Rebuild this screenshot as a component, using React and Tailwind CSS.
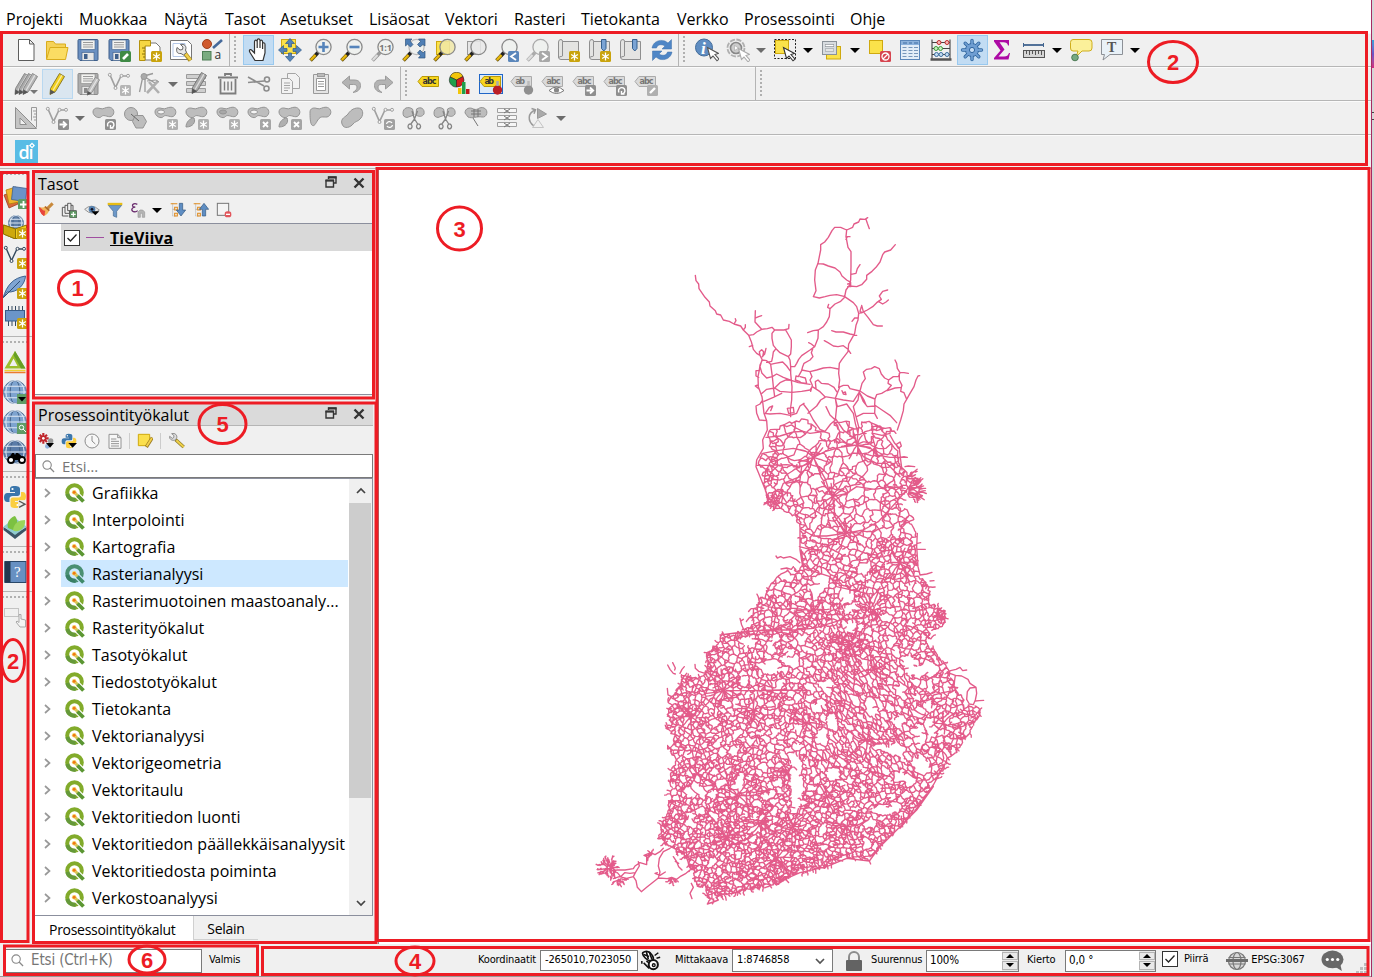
import React from "react";

/* ---------- road network ---------- */
const COAST = [
  [556, 690], [575, 665], [632, 665], [680, 650], [735, 690], [775, 650], [830, 660], [890, 665], [950, 675], [950, 690], [930, 705], [960, 780], [975, 805], [985, 830],
  [985, 880], [985, 925], [1010, 970], [1012, 1050], [1020, 1125], [1055, 1145], [1052, 1200], [1098, 1240], [1100, 1270], [1050, 1305], [1060, 1340], [1095, 1390],
  [1115, 1425], [1135, 1480], [1165, 1510], [1203, 1525], [1195, 1560], [1150, 1630], [1100, 1700], [1060, 1760], [1010, 1830], [960, 1880],
  [900, 1940], [870, 1983], [800, 1972], [740, 2000], [660, 2018], [590, 2053], [540, 2068], [480, 2078], [430, 2090], [385, 2100], [375, 2060], [350, 2065],
  [345, 2030], [310, 1970], [250, 1935], [235, 1890], [265, 1820], [270, 1730], [260, 1650], [275, 1610], [258, 1580], [262, 1500], [300, 1455],
  [305, 1425], [375, 1420], [380, 1370], [418, 1305], [490, 1290], [520, 1220], [580, 1140], [605, 1108], [665, 1100], [655, 1050], [660, 980],
  [640, 950], [600, 930], [562, 915], [548, 850], [530, 800], [550, 740],
];
const LAKES = [
  [650, 1765, 17, 62], [648, 1690, 11, 30], [575, 1402, 32, 20], [1035, 1408, 42, 16], [1020, 1605, 15, 35], [712, 1515, 18, 16], [915, 1828, 45, 10],
  [752, 1562, 14, 18], [970, 1732, 24, 12], [762, 1722, 18, 16], [483, 1745, 8, 26], [870, 1515, 13, 20], [810, 1280, 20, 17], [800, 1190, 20, 18],
  [505, 1330, 22, 18], [1050, 1585, 12, 24], [1030, 1695, 18, 20], [275, 1985, 30, 26], [620, 1380, 18, 14], [985, 1390, 16, 26], [955, 1560, 22, 12],
  [940, 1645, 26, 14], [560, 1790, 12, 10], [400, 1785, 14, 10], [720, 1140, 22, 12], [710, 1170, 14, 20], [850, 1110, 18, 10], [1045, 1515, 12, 16],
  [725, 1605, 8, 16], [525, 1850, 10, 8], [440, 1510, 14, 6], [320, 1660, 12, 9], [820, 1220, 18, 8], [490, 1440, 10, 12], [745, 1455, 10, 14], [335, 1865, 8, 14],
  [575, 1340, 12, 24], [680, 1690, 8, 16], [960, 1470, 14, 12], [905, 1640, 16, 8],
];
/* towns where main roads meet: x, y, number of roads, reach */
const HUBS = [
  [700, 772, 7, 50], [832, 735, 7, 45], [758, 890, 6, 50], [795, 1002, 7, 60], [960, 1090, 8, 60], [700, 1230, 7, 60], [870, 1225, 8, 60], [810, 1335, 9, 60], [580, 1290, 6, 60],
  [430, 1470, 8, 60], [520, 1530, 7, 60], [880, 1410, 7, 60], [680, 1570, 8, 55], [620, 1715, 8, 50], [470, 1785, 8, 70], [440, 1910, 10, 60], [590, 1975, 10, 60], [640, 1880, 8, 60],
  [800, 1880, 8, 60], [330, 1550, 7, 50], [860, 1620, 7, 60], [320, 1970, 8, 50], [540, 1870, 7, 60], [1090, 1570, 7, 50], [350, 1720, 7, 60], [740, 1790, 7, 50],
];
const HAND = [
  "346,226 348,242 356,252 357,266 375,292 388,306 390,318 406,332 410,342 422,345 430,360 448,364 462,372 482,378 490,390 500,400 506,406",
  "462,372 468,362 466,356", "490,390 496,382 496,374", "506,406 514,425 520,448 530,460 540,466 547,480", "518,436 508,440",
  "506,406 520,404 530,396 545,388 562,386 576,382 584,390 612,390 626,386 627,373", "545,388 525,366 526,332", "527,354 536,350 545,347",
  "584,390 576,400 576,415 580,436 588,446 600,458 625,470 632,462 634,440 634,420 624,402 618,392",
  "588,446 580,456 578,470 575,484 560,487", "625,470 630,480 632,500 632,520 634,541 636,560 635,600 631,630 632,650", "540,466 538,455 545,449 551,455 548,470", "558,445 554,462 547,470",
  "547,480 560,482 572,493 585,490 608,486 620,498 630,512", "632,500 644,500 650,490 656,478 665,467 690,450 704,440",
  "863,53 855,58 840,57 836,66 822,72 818,82 800,90 782,82 764,82 756,92 745,112 734,126 722,134 722,150 718,170 714,190 706,210 704,240 706,256 708,272 700,290 718,294 735,290 750,286 770,284 795,290", "858,58 862,70 868,86",
  "800,90 798,110 804,142 813,155 813,200 812,240 808,256 798,270 794,290", "798,118 802,110 810,110", "714,191 730,192 745,198 765,204 780,216 786,228 800,240 812,247",
  "803,252 812,250 812,260 803,260", "813,223 828,220 832,206 840,194", "808,258 830,260 845,254 860,238 860,226 876,214 888,202 900,186 908,164 914,156 932,150 946,134",
  "794,290 806,298 820,308 830,320 836,340 834,360 828,376 824,400 814,418 806,432 804,455 786,478 778,490 776,520 779,540 776,562",
  "845,316 850,335 864,352 880,374 892,378 907,378", "836,340 846,338 862,330 878,320 890,308 904,298 898,288 908,274 923,270", "895,304 908,312 918,306 925,300", "844,320 840,334 846,338", "832,354 824,354 816,364",
  "794,292 782,304 765,312 750,326 748,350 740,366 730,380 715,390 714,415 704,440", "750,326 743,322 746,313", "715,390 700,392 683,398", "704,440 694,432 686,428", "698,447 694,458 699,470 690,480 672,490 668,500 665,512 655,530 648,528 646,540 660,545",
  "755,392 768,396 790,396 810,402 830,406", "733,422 744,428 760,438 774,440 790,437 804,448 812,460", "665,510 690,515 710,510 730,504 750,502 775,507", "690,515 696,530 690,540 697,556 692,574", "660,530 676,534 680,550 662,548",
  "776,562 790,556 804,556 810,566 840,573 846,550 856,536 850,516 860,508 874,506 884,500 898,506 904,522 914,534 926,540 924,550 934,556 922,570 905,580 890,584 885,597 862,588 840,573",
  "926,540 940,530 955,530 960,518 952,505 950,490 945,480", "960,518 972,518 985,520", "958,520 958,540 966,556 964,562 945,564 922,572", "964,562 962,574 972,578 980,598 990,580 1002,560 1008,540 1014,528 1019,527",
  "980,598 972,612 970,632 962,660 952,690", "885,597 884,615 906,630 930,646 950,668", "885,618 884,640 892,655", "885,618 862,620 850,605 838,576",
  "547,480 540,495 538,510 534,530 535,560 546,590 548,605 552,640 560,662 562,690", "538,512 528,512 528,528 536,532", "534,555 526,558 536,566", "546,480 540,500 546,520 560,534 577,530", "548,600 540,612 528,618 530,640 538,660 560,662",
  "562,690 548,720 550,745 530,780 528,800 536,820 548,850 560,880 564,915",
  "572,493 577,530 590,522 610,532 634,541 655,548 690,553", "546,580 560,568 584,564 600,574 636,577 665,574 690,570 697,560 720,575 735,590 766,595 779,562", "584,564 600,548 618,540 634,541", "577,530 580,560 584,590", "552,604 580,592 605,580",
  "708,565 706,545 714,540 724,550 745,552 762,562 770,575", "766,595 790,600 820,604 838,576", "790,578 796,576 798,584 790,582 786,572", "838,576 834,600 820,620 828,650 836,680 830,735", "840,580 852,600 858,615", "552,640 570,642 600,640 631,646 650,640 660,618 672,610",
  "766,595 772,620 800,612 820,640 826,670 834,700", "670,612 684,630 700,660 720,688 735,694", "684,640 710,618 722,600 735,592", "735,694 752,672 766,660 770,620 766,595", "556,640 568,622 578,618 572,632", "622,625 640,622 642,638 626,640 622,625", "766,655 790,690 826,718", "830,650 850,640 884,640", "738,620 750,645 766,660",
  "558,712 600,708 640,696 670,694 690,700 735,694", "548,760 590,752 640,745 680,755 700,772 735,755 780,742 830,735 870,742 890,765 930,772 980,772", "530,796 570,796 620,794 665,800 690,785 700,772", "700,772 715,800 735,835 745,865 758,890 765,950 795,1000", "795,1000 740,1008 700,1008 660,985", "795,1000 850,990 895,965 950,905 980,870",
  "830,735 850,770 890,790 920,790 960,830", "758,890 800,880 830,860 885,868 930,860 975,865", "700,772 660,830 610,850 590,900", "665,800 660,840 620,850", "765,728 762,720 772,716 780,722 776,730",
  "875,680 900,678 910,686 890,692 875,684 890,676 908,690", "880,700 906,706 930,700 932,684",
  "660,985 660,1050 668,1100", "658,1040 690,1048 720,1050", "664,1050 672,1110", "668,1090 690,1110 720,1120 750,1130 770,1160 860,1180",
  "588,1068 592,1074 602,1070 610,1074 630,1070 648,1078 660,1088", "603,1107 620,1104 634,1108 640,1100", "975,800 985,798 1004,800", "955,745 948,734 960,726 964,738 956,745", "930,705 944,730 958,745 962,780 966,810", "960,772 972,770 982,772", "1010,1048 1036,1048", "1012,1030 1022,1028",
  "1012,1000 1010,1040 1014,1100 1020,1125", "1020,1125 1040,1122 1056,1117", "1050,1143 1062,1142",
  "1095,1422 1112,1412 1128,1408 1140,1402 1148,1412 1160,1410", "1110,1420 1126,1426 1124,1440 1122,1460 1130,1475", "1126,1426 1145,1428 1164,1438 1170,1450 1188,1462 1190,1480 1186,1500 1180,1514 1168,1512 1160,1498 1162,1475 1170,1464 1188,1462", "1186,1503 1198,1502 1211,1501", "1205,1524 1198,1530 1200,1545 1190,1560 1170,1546 1165,1515", "1170,1546 1150,1540 1130,1550",
  "263,1395 270,1408 280,1420 286,1422", "278,1388 286,1404 284,1410", "300,1420 306,1408 313,1400", "345,1393 346,1405 356,1414 375,1420", "262,1465 264,1485 275,1490", "320,1420 312,1430 304,1440", "480,1255 485,1275 492,1290", "490,1258 484,1262",
  "110,2010 135,2010 160,2006 165,1998 180,1988 200,1994 200,1970 192,1966 212,1958 225,1964 240,1955 250,1945", "100,2036 118,2030 140,2035 160,2030 168,2042 172,2062 184,2075 200,2062 235,2034 240,2016 235,1998 238,1975 250,1955 270,1945", "160,2030 166,2018 178,1998 175,1985", "112,2018 122,2030 134,2018 150,2020 166,2018",
  "235,2034 262,2036 275,2032 290,2038 300,2030 318,2020 330,2010", "232,2018 225,2020 240,2026 256,2016", "280,1970 290,1985 296,2000 306,2010", "296,1990 286,1984", "336,2096 330,2080 340,2062 334,2050", "382,2112 400,2106 415,2100 408,2092 430,2082 460,2080",
  "380,2072 376,2056 384,2040", "868,1983 872,1992", "590,2055 620,2035 660,2018 740,2000 800,1975 868,1983 900,1940 960,1880 1010,1830 1060,1760", "960,1885 1005,1832 1060,1755 1090,1700", "960,1880 870,1970",
  "520,1472 600,1470 690,1472", "380,1480 450,1472 520,1472", "420,1305 490,1296 560,1290 640,1290 700,1285 790,1258 850,1255",
];

function buildRoads() {
  let s = 20773;
  const rnd = () => {
    s = (s + 0x6d2b79f5) | 0;
    let t = Math.imul(s ^ (s >>> 15), 1 | s);
    t = (t + Math.imul(t ^ (t >>> 7), 61 | t)) ^ t;
    return ((t ^ (t >>> 14)) >>> 0) / 4294967296;
  };
  const inside = (x, y) => {
    let c = false;
    for (let i = 0, j = COAST.length - 1; i < COAST.length; j = i++) {
      const [xi, yi] = COAST[i], [xj, yj] = COAST[j];
      if (yi > y !== yj > y && x < ((xj - xi) * (y - yi)) / (yj - yi) + xi) c = !c;
    }
    return c && !LAKES.some(([a, b, rx, ry]) => ((x - a) / rx) ** 2 + ((y - b) / ry) ** 2 < 1);
  };
  const near = (x, y, a, b, r) => Math.hypot(x - a, y - b) < r;
  const base = (x, y) => {
    if (y < 760) return 32;
    if (y < 900) return x < 600 || x > 940 ? 15 : 25;
    if (y < 1010) return x < 650 ? 11 : 23;
    if (near(x, y, 940, 1080, 70) || near(x, y, 1075, 1250, 40) || near(x, y, 870, 1230, 35)) return 9.5;
    if (near(x, y, 800, 1335, 60) || near(x, y, 440, 1905, 60) || near(x, y, 600, 1960, 90)) return 7.5;
    if (y < 1180) return 14.5;
    if (y > 1900) return x > 780 ? 10.5 : 8;
    if (y > 1790) return x > 600 ? 11 : 8.2;
    if (x < 440 && y < 1620) return 10;
    if (y > 1400 && x > 900) return 13;
    return 12;
  };
  const radius = (x, y) => base(x, y) * (1 + 0.22 * Math.sin(x / 37 + Math.sin(y / 53) * 2) * Math.cos(y / 41 + x / 90));
  const metric = (dx, dy, x, y) => {
    if (x > 680 && x < 1010 && y > 1370 && y < 1720) {
      const u = dx * 0.58 + dy * 0.81, v = dx * 0.81 - dy * 0.58;
      return Math.hypot(u * 0.62, v * 1.2);
    }
    return Math.hypot(dx, dy);
  };
  const C = 30, cells = new Map(), pts = [];
  const around = (x, y, n) => {
    const out = [], cx = Math.floor(x / C), cy = Math.floor(y / C);
    for (let i = -n; i <= n; i++) for (let j = -n; j <= n; j++) {
      const l = cells.get((cx + i) * 1000 + cy + j);
      if (l) for (const k of l) out.push(k);
    }
    return out;
  };
  for (let t = 0; t < 52000; t++) {
    const x = 230 + rnd() * 980, y = 570 + rnd() * 1540;
    if (!inside(x, y)) continue;
    const r = radius(x, y) * (0.5 + rnd() * 0.95);
    if (around(x, y, 1).some((k) => metric(pts[k][0] - x, pts[k][1] - y, x, y) < r)) continue;
    const key = Math.floor(x / C) * 1000 + Math.floor(y / C);
    if (!cells.has(key)) cells.set(key, []);
    cells.get(key).push(pts.length);
    pts.push([x, y]);
  }
  let d = "";
  const f = (n) => n.toFixed(1);
  const road = (a, b, c, e) => {
    const L = Math.hypot(c - a, e - b), w = () => (rnd() - 0.5) * 0.38 * L;
    d += `M${f(a)} ${f(b)}L${f(a + (c - a) * 0.33 + w())} ${f(b + (e - b) * 0.33 + w())} ${f(a + (c - a) * 0.67 + w())} ${f(b + (e - b) * 0.67 + w())} ${f(c)} ${f(e)}`;
  };
  pts.forEach(([x, y], i) => {
    const r = radius(x, y), nb = around(x, y, 2).filter((k) => k !== i && Math.hypot(pts[k][0] - x, pts[k][1] - y) < r * 3.6);
    for (const k of nb) {
      if (k < i) continue;
      const [a, b] = pts[k], D = metric(a - x, b - y, x, y);
      if (D > r * 2.8 || ![0.3, 0.5, 0.7].every((t) => inside(x + (a - x) * t, y + (b - y) * t))) continue;
      let rng = true, gab = true;
      for (const m of nb) {
        if (m === k) continue;
        const d1 = metric(pts[m][0] - x, pts[m][1] - y, x, y), d2 = metric(pts[m][0] - a, pts[m][1] - b, x, y);
        if (d1 < D && d2 < D) rng = false;
        if (d1 * d1 + d2 * d2 < D * D) gab = false;
      }
      if (rng || (gab && rnd() < 0.4)) road(x, y, a, b);
    }
    if (rnd() < 0.2) {
      const t = rnd() * 6.28, l = 5 + rnd() * r * 0.6;
      road(x, y, x + Math.cos(t) * l, y + Math.sin(t) * l);
    }
    if (y > 1150 && (!inside(x + 14, y + 4) || !inside(x - 14, y) || !inside(x, y + 14))) {
      const t = rnd() * 6.28, l = 6 + rnd() * 12;
      road(x, y, x + Math.cos(t) * l, y + Math.sin(t) * l);
    }
  });
  for (const [hx, hy, n, reach] of HUBS) {
    const turn = rnd() * 6.28;
    for (let i = 0; i < n; i++) {
      let t = turn + (i * 6.283) / n + (rnd() - 0.5) * 0.5, x = hx, y = hy, run = `M${x} ${y}`;
      const steps = Math.round((reach * (0.6 + rnd() * 0.6)) / 8);
      for (let k = 0; k < steps; k++) {
        t += (rnd() - 0.5) * 0.5;
        const nx = x + Math.cos(t) * 8, ny = y + Math.sin(t) * 8;
        if (!inside(nx, ny)) break;
        x = nx; y = ny;
        run += `L${f(x)} ${f(y)}`;
      }
      d += run;
    }
  }
  const fan = (x, y, r0, r1, a0, a1, n) => {
    for (let i = 0; i < n; i++) {
      const t = a0 + ((a1 - a0) * i) / n + rnd() * 0.1, l = r0 + rnd() * (r1 - r0), q = r0 * 0.3;
      road(x + Math.cos(t) * q, y + Math.sin(t) * q, x + Math.cos(t) * l, y + Math.sin(t) * l);
      const e = t + (rnd() - 0.5) * 1.6;
      road(x + Math.cos(t) * l * 0.7, y + Math.sin(t) * l * 0.7, x + Math.cos(t) * l * 0.7 + Math.cos(e) * 12, y + Math.sin(t) * l * 0.7 + Math.sin(e) * 12);
    }
  };
  fan(972, 872, 50, 74, -0.75, 0.8, 13);
  fan(972, 835, 25, 50, -0.7, 0.5, 6);
  fan(86, 2002, 14, 40, 0, 6.28, 19);
  fan(118, 2036, 10, 26, 0.2, 3, 6);
  fan(215, 1965, 6, 18, 2.5, 5.5, 4);
  fan(275, 2034, 8, 18, 0.3, 2.8, 5);
  fan(1068, 1250, 16, 36, -1.2, 1.5, 6);
  fan(580, 900, 12, 30, 0, 6.28, 9);
  for (let x = 390; x < 760; x += 11) road(x, 2100 - (x - 390) * 0.3, x - 8 + rnd() * 16, 2094 - (x - 390) * 0.3 + rnd() * 22);
  return d + HAND.map((l) => "M" + l).join("");
}
const ROADS = buildRoads();

/* ---------- icon pieces ---------- */
const Star = ({ x = 12, y = 12, c = "#c9a30c" }) => (
  <g transform={`translate(${x} ${y})`}>
    <rect width="11" height="11" rx="1.5" fill={c} />
    <path d="M5.5 1.6v7.8M2.1 3.5l6.8 4M8.9 3.5l-6.8 4" stroke="#fff" strokeWidth="1.3" />
  </g>
);
const Badge = ({ x = 12, y = 12, c = "#8f8f8f", d, w = 1.8 }) => (
  <g transform={`translate(${x} ${y})`}>
    <rect width="11" height="11" rx="1.5" fill={c} />
    <path d={d} stroke="#fff" strokeWidth={w} fill="none" />
  </g>
);
const ARROW = "M1.5 5.5h6M5 2.5l3.2 3-3.2 3";
const CROSS = "M3 3l5 5M8 3l-5 5";
const ROT = "M3 7.5A3.2 3.2 0 1 1 5.8 9M5.5 6v3h3";
const BEAN = "M1 6C1 2.5 4.500 1.200 8 2.500S13 1 17 1.200S23.500 6 20.500 9.500S12 7.500 9.500 10.500S1 10 1 6Z";
const G1 = "#bdbdbd", G2 = "#949494";
const Bean = ({ d = BEAN }) => <path d={d} fill={G1} stroke={G2} />;
const Lens = ({ f = "#eef1ef", s = "#8a8a8a", h = "#e8b80c", hs = "#222", cx = 14.5, cy = 9 }) => (
  <g>
    <path d="M9 14.500L6 17.800" stroke={hs} strokeWidth="3.600" />
    <path d="M6.500 17.200L1.500 22.500" stroke={hs === "#222" ? "#6b5510" : hs} strokeWidth="3.600" />
    <path d="M6.500 17L1.800 22" stroke={h} strokeWidth="2.400" />
    <circle cx={cx} cy={cy} r="7.600" fill={f} fillOpacity=".85" stroke={s} strokeWidth="1.300" />
  </g>
);
const Cursor = ({ x = 10, y = 9, s = "#555" }) => (
  <path transform={`translate(${x} ${y})`} d="M.5.5l3 11 2.500-2.500 4 4.800 2-1.700-4-4.500 3.500-1.200z" fill="#fff" stroke={s} strokeWidth="1.100" />
);
const Tag = ({ f = "#f7d51d", s = "#b89a0a", t = "abc", c = "#333" }) => (
  <g transform="translate(0 2)">
    <path d="M1 7.500L5 2.500H21.500V12.500H5Z" fill={f} stroke={s} />
    <text x="5.500" y="10.300" fontSize="8" fontWeight="700" fill={c} className="font-['DejaVu_Sans']" textLength={t === "abc" ? 14 : 9.5}>{t}</text>
  </g>
);
const GTag = ({ t }) => <Tag t={t} f="#dadada" s="#aaa" c="#777" />;
const Node = ({ c = "#a0a0a0", w = 1.7 }) => (
  <g stroke={c} fill="#f4f4f4" strokeWidth={w}>
    <path d="M3 3L8.500 15.500L14 4H21" fill="none" />
    <circle cx="2.800" cy="2.800" r="1.500" strokeWidth="1" /><circle cx="8.500" cy="16" r="1.500" strokeWidth="1" /><circle cx="14.500" cy="3.800" r="1.500" strokeWidth="1" /><circle cx="21" cy="3.800" r="1.500" strokeWidth="1" />
  </g>
);
const Floppy = ({ f = "#6a8fc0", s = "#3f5f8a" }) => (
  <g>
    <path d="M2 2.500Q2 1.500 3 1.500H21Q22 1.500 22 2.500V21.500Q22 22.500 21 22.500H4L2 20.500Z" fill={f} stroke={s} />
    <rect x="5" y="2" width="14" height="9.500" fill="#f2f2f0" stroke={s} strokeWidth=".6" />
    <path d="M7 4.500h10M7 6.800h10M7 9h10" stroke="#9a9a9a" />
    <rect x="6" y="14.500" width="12" height="8" fill="#e6e6e6" stroke={s} strokeWidth=".6" /><rect x="8" y="16" width="3.500" height="5" fill={s} />
  </g>
);
const Pencil = ({ f = "#f0cf1e", s = "#8c7a2a", t = "" }) => (
  <g transform={t}>
    <path d="M14.500 1.500L19.500 4.500L10.500 19.500L5 22.500L5.500 16.500Z" fill={f} stroke={s} />
    <path d="M17 3.200L8 18.500" stroke="#fff" strokeOpacity=".6" strokeWidth="1.300" /><path d="M5 22.500l.3-5 5 2.700z" fill="#555" />
  </g>
);
const Scroll = () => <path d="M1.500 4Q1.500 1.500 4 1.500Q5.500 1.500 5.500 3.500H21.500V21.500H4Q1.500 21.500 1.500 19ZM5.500 3.500V18Q5 18.500 4 18.500Q2 18.500 1.500 20" fill="#e4e4e2" stroke="#8f8f8f" />;
const Ribbon = ({ x = 13.5 }) => <path d={`M${x} 1.500h4.500v9l-2.200 2.500l-2.300-2.500z`} fill="#7ba4d4" stroke="#35608f" />;
const Globe = ({ x = 12, y = 12, r = 11.5, f = "#7da3cf" }) => (
  <g stroke="#dfe9f4" strokeWidth="1" fill="none">
    <circle cx={x} cy={y} r={r} fill={f} stroke="#5b7898" />
    <ellipse cx={x} cy={y} rx={r * 0.42} ry={r} stroke="#46648a" /><ellipse cx={x} cy={y} rx={r * 0.8} ry={r} /><path d={`M${x - r} ${y}h${2 * r}M${x - r * 0.85} ${y - r * 0.5}h${1.7 * r}M${x - r * 0.85} ${y + r * 0.5}h${1.7 * r}`} />
  </g>
);
const Scissors = () => <path d="M12.500 13L8.500 18.500M12.500 13L16 18.500M12.500 13L15.500 5M12.500 13L10 5M8 18a2 2.400 0 1 0 .1 0M16.500 18a2 2.400 0 1 0 .1 0" fill="none" stroke="#858585" strokeWidth="1.300" />;
const Python = () => (
  <g>
    <path d="M11.500 1C7.500 1 7 2.500 7 4V7H12V8H4.500C2 8 1 10 1 12.500S2 17 4.500 17H6.500V13.500C6.500 12 8 11 9.500 11H14.500C16 11 17 10 17 8.500V4C17 2 15.500 1 11.500 1Z" fill="#3b76ab" />
    <path d="M12.500 23C16.500 23 17 21.500 17 20V17H12V16H19.500C22 16 23 14 23 11.500S22 7 19.500 7H18V10.500C18 12 16.500 12.500 15 12.500H10C8.500 12.500 7.500 13.500 7.500 15V20C7.500 22 8.500 23 12.500 23Z" fill="#fbce3f" />
    <circle cx="9.500" cy="4" r="1.100" fill="#fff" /><circle cx="14.500" cy="20" r="1.100" fill="#fff" />
  </g>
);

const I = {
  file: <path d="M4.500 1.500h11l4.500 4.500v16.500H4.500zM15.500 1.500V6H20" fill="#fff" stroke="#5c5c5c" />,
  folder: <g stroke="#d9ac1c"><path d="M1.500 21V3.500H8.500L10.500 6H20.500V10" fill="#f5d258" /><path d="M1.500 21.500L5 9.500H23L20.500 21.500Z" fill="#fbdd63" /></g>,
  save: <Floppy />,
  saveAs: <g><Floppy /><Badge c="#3f8a45" d="M3 8l5-5" w={2.6} x={13} y={13} /></g>,
  layout: <g><path d="M7 5h11l4 4v13H7z" fill="#fff" stroke="#777" /><path d="M1.500 2.500h11v5.500h-5.500v14.500h-5.500z" fill="#f6d743" stroke="#b5920c" /><path d="M4 10h3M5 13h2M4 16h3M5 19h2" stroke="#8a7008" /><Star x={13} y={13} /></g>,
  layoutMgr: <g><path d="M1.500 2.500h17l4 4v15h-21z" fill="#fff" stroke="#777" /><path d="M4 5.500h12v13H4z" fill="none" stroke="#b4c8e8" /><path d="M14.500 13.500L21.500 22.500" stroke="#a98a20" strokeWidth="4.400" /><path d="M14.500 13.500L21.500 22" stroke="#f2d04a" strokeWidth="2.600" /><path d="M8 9.500l3 2.500 2.500-.5.5-2.500-2.500-2.500c4-1 6.500 2 5 5.500l1 2.500-3 2.500-2.500-1.500c-4 .5-5-2-4-6z" fill="#e8e8e8" stroke="#666" /></g>,
  style: <g><circle cx="7" cy="6" r="4.500" fill="#d05a2e" stroke="#a0401c" /><path d="M13 10l9-8" stroke="#44699b" strokeWidth="2.600" /><rect x="2.500" y="13.500" width="8.500" height="8.500" fill="#79ab80" stroke="#4e7f56" /><text x="14.500" y="21" fontSize="12" fill="#333" className="font-['Open_Sans']">a</text></g>,
  hand: <path d="M8 22.500L3 14.500C1.500 12 3.500 10.500 5 12.500L7.500 15V4C7.500 1.500 10 1.500 10.200 4V10V2.500C10.400.3 12.800.5 13 2.500V10V3.500C13.200 1.600 15.500 1.800 15.600 4V11V6C15.800 4.200 18 4.300 18 6.500V15L16 22.500Z" fill="#fff" stroke="#333" strokeWidth="1.200" />,
  panSel: <g><rect x="3.500" y="1.500" width="14" height="14" fill="#fbe24a" stroke="#cfa90f" /><path d="M12 .5l4.500 5h-3v3.500h-3V5.500h-3zM12 23.500l4.500-5h-3V15h-3v3.500h-3zM.5 12l5-4.500v3H9v3H5.500v3zM23.500 12l-5-4.500v3H15v3h3.500v3z" fill="#5383b8" stroke="#305b8b" strokeWidth=".7" /></g>,
  zin: <g><Lens /><path d="M14.500 4v10M9.500 9h10" stroke="#5584bb" strokeWidth="2.600" /></g>,
  zout: <g><Lens /><path d="M9.500 9h10" stroke="#5584bb" strokeWidth="2.600" /></g>,
  z11: <g><Lens h="#ddd" hs="#999" /><text x="8.300" y="12.500" fontSize="9" fontWeight="700" fill="#777" textLength="12.500" className="font-['Open_Sans']">1:1</text></g>,
  zfull: <g><Lens s="#bbb" /><path d="M3.500 1H10L8 3l3 3.500-2.500 2.500-3-2.800L3.500 8zM23 1h-6.500l2 2.500-3 3 2.500 2.500 3-2.500L23 8zM23 20v-7l-2 2-3-3-2.500 3 3 2.500-2 2.500z" fill="#4f7fb5" stroke="#31587f" strokeWidth=".7" /></g>,
  zsel: <g><rect x="3.500" y="3.500" width="13" height="13" fill="#fbe24a" stroke="#cfa90f" /><Lens f="#f0e7a8" /></g>,
  zlay: <g><rect x="3.500" y="3.500" width="13" height="13" fill="#e6e6e6" stroke="#999" /><Lens f="#e9e9e9" /></g>,
  zlast: <g><Lens /><Badge c="#5b87bb" d="M8 2L3 5.500L8 9" x={13} y={13} /></g>,
  znext: <g><Lens s="#aaa" h="#ddd" hs="#aaa" /><Badge c="#a8a8a8" d="M3 2L8 5.500L3 9" x={13} y={13} /></g>,
  newMap: <g><Scroll /><Star x={12} y={13} /></g>,
  newBm: <g><Scroll /><Ribbon /><Star x={12} y={13} /></g>,
  bm: <g><Scroll /><Ribbon /></g>,
  refresh: <g fill="#4f86c6" stroke="#3c6fa9" strokeWidth=".5"><path d="M2 10C3 4 9 1 15 3L18 5L21.500 1.500V11H12L15 8C11 5.500 7 7 6.500 10Z" /><path d="M22 14C21 20 15 23 9 21L6 19L2.500 22.500V13H12L9 16C13 18.500 17 17 17.500 14Z" /></g>,
  info: <g><circle cx="9" cy="9.500" r="8.500" fill="#5f8dc2" stroke="#426c9b" /><text x="6" y="15.500" fontSize="17" fontWeight="700" fontStyle="italic" fill="#fff" className="font-['Liberation_Serif']">i</text><Cursor x={12} y={9} /></g>,
  action: <g fill="#ececec" stroke="#aaa"><circle cx="10" cy="10" r="8.500" stroke="#b0b0b0" strokeWidth="1.800" strokeDasharray="5.200 1.500" /><circle cx="10" cy="10" r="5.500" fill="#ccc" stroke="#888" strokeWidth="1.600" /><path d="M8.500 7.500l4 2.500-4 2.500z" fill="#fff" stroke="#999" strokeWidth=".5" /><Cursor x={12} y={10} s="#aaa" /></g>,
  select: <g><rect x="1.500" y="1.500" width="21" height="19" fill="none" stroke="#222" strokeDasharray="2 1.500" /><rect x="2.500" y="2.500" width="13" height="13" fill="#fbe24a" stroke="#cfa90f" /><Cursor x={10} y={9} s="#333" /></g>,
  selVal: <g><rect x="6.500" y="8.500" width="14" height="12.500" fill="#fbe24a" stroke="#cfa90f" /><rect x="2.500" y="3.500" width="14" height="13" fill="#d8dce0" stroke="#8b9299" /><path d="M5 7.500h9M5 12h9" stroke="#8f959b" strokeWidth="3.200" /><path d="M5.500 7.500h8M5.500 12h8" stroke="#fff" strokeWidth="1.500" /></g>,
  desel: <g><rect x="2.500" y="2.500" width="13" height="13" fill="#fbe24a" stroke="#cfa90f" /><rect x="13" y="13" width="11" height="11" rx="1.500" fill="#d64550" /><circle cx="18.500" cy="18.500" r="3.500" fill="none" stroke="#fff" strokeWidth="1.300" /><path d="M16 21l5-5" stroke="#fff" strokeWidth="1.300" /></g>,
  table: <g><rect x="2.500" y="2.500" width="19" height="19" fill="#e3edf8" stroke="#5a86ba" /><path d="M3 5h18" stroke="#8db2dc" strokeWidth="4" /><path d="M5 5h4M11 5h3M16 5h4" stroke="#3f6ca3" /><path d="M4.500 9.500h4M10.500 9.500h4M16 9.500h4M4.500 12.500h4M10.500 12.500h4M16 12.500h4M4.500 15.500h4M10.500 15.500h4M16 15.500h4M4.500 18.500h4M10.500 18.500h4M16 18.500h4" stroke="#7796ba" /></g>,
  abacus: <g fill="none"><path d="M3 1.500v20M21 1.500v20M3 4.500h18M3 10.500h18M3 16.500h18" stroke="#444" strokeWidth="1.100" /><path d="M1.500 21.500h21" stroke="#555" strokeWidth="2.500" /><g fill="#f6b8b8" stroke="#c02a2a"><circle cx="10" cy="4.500" r="2" /><circle cx="18" cy="4.500" r="2" /></g><g fill="#c8efc0" stroke="#3f9a3a"><circle cx="7" cy="10.500" r="2" /><circle cx="11.500" cy="10.500" r="2" /></g><g fill="#c4dcf2" stroke="#3e6f9e"><circle cx="7.500" cy="16.500" r="2" /><circle cx="12" cy="16.500" r="2" /><circle cx="18" cy="16.500" r="2" /></g></g>,
  gear: <g fill="none" stroke="#2f659f"><path d="M12 2.500v19M2.500 12h19M5.200 5.200l13.600 13.600M18.800 5.200L5.200 18.800" strokeWidth="3.400" strokeLinecap="round" /><circle cx="12" cy="12" r="6.500" fill="#6f9ed2" /><path d="M12 2.500v19M2.500 12h19M5.200 5.200l13.600 13.600M18.800 5.200L5.200 18.800" stroke="#6f9ed2" strokeWidth="1.800" strokeLinecap="round" /><circle cx="12" cy="12" r="2.600" fill="#c5dcf3" /></g>,
  sigma: <path d="M3 2H18V7.500H17C16.500 5 15 4.300 12.500 4.300H8.500L13.500 11.500L7.500 18.500H13C16 18.500 17 17.500 18 15H19L17.500 21.500H3V20L9.500 12.500L3 3.500Z" fill="#ad0aa4" />,
  ruler: <g><path d="M1 7h21" stroke="#41648f" strokeWidth="1.800" /><path d="M1.500 5v4M21.500 5v4" stroke="#41648f" /><rect x="1.500" y="12.500" width="21" height="7" fill="#d5d5d5" stroke="#555" /><path d="M4.500 13v3M7.500 13v4M10.500 13v3M13.500 13v4M16.500 13v3M19.500 13v4" stroke="#555" /></g>,
  tip: <g><path d="M4 1.500H20Q23 1.500 23 4.500V10Q23 13 20 13H13L7 19L9 13H4Q1.500 13 1.500 10V4.500Q1.500 1.500 4 1.500Z" fill="#fbf09a" stroke="#cfae1c" /><circle cx="6" cy="19.500" r="3.300" fill="#77a982" stroke="#4d7b56" /></g>,
  textAnn: <g><path d="M1.500 1.500h21v15H10l-7 5.500 1.500-5.500h-3z" fill="#e9f1f7" stroke="#8c9096" /><text x="7" y="13.500" fontSize="14" fontWeight="700" fill="#555" className="font-['Liberation_Serif']">T</text></g>,
  pencils: <g><Pencil f="#aaa" s="#888" t="translate(-4 0)" /><Pencil f="#aaa" s="#888" /><Pencil f="#b5b5b5" s="#888" t="translate(4 0)" /><path d="M16 18h8l-4 4z" fill="#777" /></g>,
  pencil: <Pencil />,
  saveEd: <g><Floppy f="#adadad" s="#8a8a8a" /><Pencil f="#c2c2c2" s="#888" t="translate(7 4) scale(.85)" /></g>,
  addLine: <g><Node /><Star c="#b5b5b5" x={13} y={13} /></g>,
  vertex: <g stroke="#999" fill="none"><path d="M5 4L1.500 20M7 5L7 20M5 4L17 11M6 4l9-2.500" strokeWidth="1.300" /><circle cx="6" cy="4.500" r="3" fill="#aaa" /><path d="M11 10l10 11M20 9L9 21" strokeWidth="2.600" stroke="#b0b0b0" /><path d="M9 9l9-1 3 2" /></g>,
  multi: <g><path d="M1.500 2.500h19v4h-19zM1.500 9.500h19v4h-19zM1.500 16.500h19v4h-19z" fill="#cfcfcf" stroke="#9b9b9b" /><Pencil f="#aaa" s="#777" t="translate(2 -1)" /></g>,
  trash: <g fill="none" stroke="#7d7d7d" strokeWidth="1.800"><path d="M4.500 7v14.500h15V7M2 5.500h20M9 4V2h6v2" /><path d="M8.500 9.500v9M12 9.500v9M15.500 9.500v9" strokeWidth="1.400" /></g>,
  cut: <g fill="none" stroke="#8c8c8c" strokeWidth="1.600"><path d="M1 5L17 14M1 10.500L17 9" /><circle cx="20" cy="7.500" r="2.500" /><circle cx="19.500" cy="16.500" r="2.500" /></g>,
  copy: <g fill="#f2f2f2" stroke="#a5a5a5"><path d="M9.500 1.500h8l4 4v11h-12z" /><path d="M3.500 6.500h8l3 3v12h-11z" /><path d="M6 11h6M6 13.500h6M6 16h6M6 18.500h4" /></g>,
  paste: <g fill="#e4e4e4" stroke="#9a9a9a"><path d="M4.500 2.500h15v19h-15z" /><path d="M7.500 6.500h9v12h-9z" fill="#fff" /><path d="M9 9.500h6M9 12h6M9 14.500h6" /><rect x="8.500" y="1.500" width="7" height="3" fill="#bbb" /></g>,
  undo: <path d="M2 10.500L9.500 4V8H14C19 8 20.500 10.500 20.500 13.500C20.500 18 17 20 13 20.500C16 18.500 17 17 17 15C17 13 15.500 12.500 13.500 12.500H9.500V17Z" fill="#b3b3b3" stroke="#9b9b9b" />,
  redo: <g transform="translate(24 0) scale(-1 1)"><path d="M2 10.500L9.500 4V8H14C19 8 20.500 10.500 20.500 13.500C20.500 18 17 20 13 20.500C16 18.500 17 17 17 15C17 13 15.500 12.500 13.500 12.500H9.500V17Z" fill="#b3b3b3" stroke="#9b9b9b" /></g>,
  abc: <Tag />,
  diag: <g strokeWidth=".6" stroke="#222"><path d="M8.500 8L2 5A7 7 0 0 1 15 4.500Z" fill="#f2c60a" /><path d="M8.500 8L2 5A7 7 0 0 0 8.500 15Z" fill="#1f9f4b" /><path d="M8.500 8L15 4.500A7 7 0 0 1 8.500 15Z" fill="#d21f1f" /><g stroke="none"><rect x="10" y="16" width="3.500" height="6" fill="#f2c60a" /><rect x="14" y="10" width="3.500" height="12" fill="#1f9f4b" /><rect x="18" y="17" width="3.500" height="5" fill="#c01818" /></g></g>,
  abPin: <g><rect x=".5" y="2.500" width="23" height="19" fill="#dbe9f8" stroke="#1f65c7" /><Tag t="ab" /><circle cx="18.500" cy="18" r="4.700" fill="#ba1f26" /><path d="M18.500 14V9" stroke="#aaa" strokeWidth="2.500" /></g>,
  abGray: <g><GTag t="ab" /><circle cx="18.500" cy="18" r="4.700" fill="#8f8f8f" /><path d="M18.500 14V9" stroke="#bbb" strokeWidth="2.500" /></g>,
  abEye: <g><GTag /><path d="M8 18.500Q15.500 11.500 23 18.500Q15.500 24.500 8 18.500Z" fill="#fff" stroke="#777" /><circle cx="15.500" cy="18" r="2.600" fill="#888" /></g>,
  abMove: <g><GTag /><Badge d={ARROW} x={13} y={13} /></g>,
  abRot: <g><GTag /><Badge d={ROT} x={13} y={13} w={1.4} /></g>,
  abEd: <g><GTag /><Badge c="#b0b0b0" d="M3 8l5-5" x={13} y={13} w={2.4} /></g>,
  tri: <g><path d="M1.500 1.500V22.500H22.500ZM6 12v6.500h6.500z" fill="#c4c4c4" stroke="#8f8f8f" fillRule="evenodd" /><path d="M17.500 1.500h5v20M17.500 1.500v13" fill="none" stroke="#999" /><path d="M19 5h3M20 8h2M19 11h3M20 14h2" stroke="#999" /></g>,
  move: <g><Node /><Badge d={ARROW} x={13} y={13} /></g>,
  rot: <g><Bean /><Badge d={ROT} x={13} y={13} w={1.4} /></g>,
  simp: <g fill={G1} stroke={G2}><circle cx="8" cy="8" r="6.500" /><path d="M12 9.500h8l3.500 6-3.500 6.500h-7l-3.500-6.500z" /><path d="M8 8l8 7" stroke="#666" fill="none" /></g>,
  ring: <g><Bean /><ellipse cx="7" cy="6" rx="3.500" ry="2" fill="#f4f4f4" stroke={G2} /><Star c="#b0b0b0" x={13} y={13} /></g>,
  part: <g><Bean /><path d="M1 21c0-5 4-9 8-9 2 4-1 9-8 9z" fill="#b0b0b0" stroke={G2} /><Star c="#b0b0b0" x={13} y={13} /></g>,
  fill: <g><Bean /><ellipse cx="7" cy="6" rx="3.500" ry="2" fill="#a8a8a8" stroke={G2} /><Star c="#b0b0b0" x={13} y={13} /></g>,
  delRing: <g><Bean /><ellipse cx="7" cy="6" rx="3.500" ry="2" fill="#f4f4f4" stroke={G2} /><Badge c="#a5a5a5" d={CROSS} x={13} y={13} /></g>,
  delPart: <g><Bean /><path d="M1 21c0-5 4-9 8-9 2 4-1 9-8 9z" fill="#b0b0b0" stroke={G2} /><Badge c="#a5a5a5" d={CROSS} x={13} y={13} /></g>,
  reshape: <Bean d="M1 6C1 2.500 4.500 1.200 8 2.500S13 1 17 1.200S23.500 6 20.500 9.500S13 9 10 12.500S6 20.500 3.500 19.500S1 10 1 6Z" />,
  offset: <Bean d="M2 18C0 12 6 11 8 8S13 2 18 2S24 8 21 12S15 15 13 18S4 24 2 18Z" />,
  split: <g><Node /><Badge c="#a0a0a0" d="M2.500 5A3 3 0 0 1 8 4M8.500 6A3 3 0 0 1 3 7" x={13} y={13} w={1.3} /></g>,
  splitF: <g><Bean d="M1 7C1 2 6 0 10.500 3L12 9L5 11.500C2 11 1 10 1 7ZM14.500 3C19 0 23 3 22 8C20 11 17 11 14 9Z" /><Scissors /></g>,
  merge: <g><Bean d="M1 7C1 2 6 1 9.500 3C14 5 15 0 20 2S23 12 18 11S8 13 4 11Z" /><path d="M7 5h10M7 8h10M10 3v8M14 3v8M9 12l5 8" stroke="#777" fill="none" /></g>,
  mergeA: <g fill="#f6f6f6" stroke="#a0a0a0"><path d="M2.500 2.500h19v4h-19zM2.500 9.500h19v4h-19zM2.500 16.500h19v4h-19z" /><path d="M9 3l6 4M15 3L9 7M9 10l6 4M15 10l-6 4M9 17l6 4M15 17l-6 4" stroke="#777" /></g>,
  rotSym: <g fill="none" stroke="#999"><path d="M8 20C1 15 2 7 9 4M5.500 2.500l4 1.200-1.500 4" strokeWidth="1.500" /><path d="M11.500 2.500l9 5.500-9 4.500z" fill="#aaa" /><path d="M6.500 21.500h11l-5.500-8z" stroke="#c4c4c4" /></g>,
  di: <g><rect width="23" height="23" x="1" fill="#58bce5" /><text x="4.500" y="18.500" fontSize="18" fill="#fff" fontWeight="600" className="font-['Open_Sans']" textLength="15">dı</text><path d="M18 2.500l3 3-3 3-3-3z" fill="#fff" /><path d="M18 4.500v2M17 5.500h2" stroke="#58bce5" /></g>,
  layers: <g strokeWidth=".8"><path d="M1 10l8-3 6 12-9 4z" fill="#d8683a" stroke="#9c3f1d" /><path d="M3 5l10-3 3 15-10 2z" fill="#f0b72c" stroke="#b17e0d" /><path d="M10 1.500l14 2-1.500 13-14-2z" fill="#6a93c8" stroke="#3c618f" /><Badge c="#5e9c64" d="M5.500 2v7M2 5.500h7" x={15} y={14} /></g>,
  box: <g><Globe x={13} y={8} r={7.500} f="#5f7fa8" /><path d="M.5 10l12 4 11-4v9l-11 5-12-5z" fill="#f0cf1d" stroke="#8c7405" /><path d="M.5 10l12 4v10l-12-5z" fill="#cda80c" stroke="#8c7405" /><Star x={14} y={13} /></g>,
  vline: <g><Node c="#34495e" w={1.4} /><Star x={14} y={13} /></g>,
  feather: <g><path d="M0 23C4 10 10 3 22.500 1C22 9 15 18 4 17Z" fill="#7fa5d2" stroke="#3e6490" /><path d="M1 22L17 6" stroke="#2f4f76" /><Star x={14} y={13} /></g>,
  chip: <g><path d="M5.500 1v20M9 1v20M12.500 1v20M16 1v20M19.500 1v20" stroke="#34495e" /><rect x="2.500" y="5.500" width="19" height="10.500" fill="#6b95c8" stroke="#395d88" /><Star x={14} y={13} /></g>,
  tri2: <g><path d="M12 1L22.500 18.500H1.500ZM10.500 8.500L6.500 16H14.500Z" fill="#9cbf2c" fillRule="evenodd" /><path d="M12 1L22.500 18.500H18L10.500 5Z" fill="#679f24" /><path d="M1.500 20.500h21" stroke="#f0d030" strokeWidth="1.500" /><path d="M1.500 22.500h21" stroke="#ec7a2e" strokeWidth="1.500" /></g>,
  globeAdd: <g><Globe /><rect x="14" y="14" width="10" height="10" fill="#5f9c66" /><path d="M15 17h8l-4 4.500z" fill="#000" /></g>,
  globeFind: <g><Globe /><rect x="14" y="13" width="10" height="11" fill="#5f9c66" /><circle cx="18.500" cy="17.500" r="2.200" fill="none" stroke="#fff" /><path d="M20 19l3 3" stroke="#fff" /></g>,
  binoc: <g><Globe f="#5a7ca8" /><path d="M5 20L9 13h2l1 2 1-2h2l8 7z" fill="#000" /><circle cx="8" cy="20" r="3" fill="#fff" stroke="#000" strokeWidth="1.800" /><circle cx="19" cy="20" r="3" fill="#fff" stroke="#000" strokeWidth="1.800" /></g>,
  py: <g><Python /><rect x="15" y="15" width="9" height="8" fill="#f0f0f0" opacity=".8" /><path d="M16 16l6 3.200-6 3.200" fill="none" stroke="#555" strokeWidth="1.400" /></g>,
  leaf: <g><path d="M.5 15L12 24l11.500-9v-3L12 19 .5 12z" fill="#3b5566" /><path d="M.5 11.500L12 3l11.500 8.500L12 20z" fill="#8ecbd0" /><path d="M5 13C3 7 8 2 12 1C16 6 14 12 10 15Z" fill="#7cc142" /><path d="M10 15C11 8 16 5 22 5C23 12 18 17 11 16Z" fill="#9bd45a" /></g>,
  help: <g><rect x="2" y="1.500" width="21" height="21" fill="#6790c2" stroke="#2a4869" /><rect x="1.500" y="1.500" width="6" height="21" fill="#22384f" /><text x="11" y="17" fontSize="15" fill="#fff" className="font-['Liberation_Serif']">?</text></g>,
  faint: <g fill="none" stroke="#c3c3c3"><rect x="1.500" y="3.500" width="14" height="8" /><path d="M16 9.500v8l-2-1.500-1 1 4 5h5.500v-7l-4.500-1v-4.500z" stroke="#a9a9a9" fill="#f4f4f4" /></g>,
  brush: <g><path d="M14 10L22 2" stroke="#c98a3c" strokeWidth="4.500" /><path d="M1 7L8 10L12 18L9 21Q2 16 1 7Z" fill="#e8453c" /><path d="M1 7q7 3 10-1l6 6q-2 7-8 9q4-7-8-14z" fill="#f3b65c" /><path d="M3 12l8 1-2 8q-5-3-6-9z" fill="#e8453c" /><path d="M10.500 7l6.500 6" stroke="#b0682c" strokeWidth="2.500" /></g>,
  addGrp: <g fill="none" stroke="#5b5b5b" strokeWidth="1.500"><path d="M6 8H2v13h9M10 5H6v12h12V5h-3M13 2h-3v11h5V2zM13 13v4" /><Badge c="#5e9c64" d="M5.500 2v7M2 5.500h7" x={13} y={13} /></g>,
  eye: <g><path d="M1 11Q11 1 23 12Q12 22 1 11Z" fill="#e8e8e8" stroke="#888" strokeWidth="1.300" /><circle cx="12" cy="11" r="5" fill="#5480ae" /><circle cx="12" cy="11" r="2" fill="#112" /><path d="M11 14h12l-6 6z" fill="#000" /></g>,
  funnel: <g><path d="M2 5h20l-7.500 9v9l-5-2v-7z" fill="#6d98c9" stroke="#41688f" /><path d="M1 3h22" stroke="#e8bd15" strokeWidth="3.500" /></g>,
  eps: <g fill="none"><path d="M11 3.500C6 1 2 4 4.500 6.800C5.500 7.800 7 7.800 8 7.800C3 8 1 12 4.500 14C7 15.200 10 14.500 11.500 13" stroke="#6a2c6e" strokeWidth="1.900" /><path d="M12 23v-8l3-3h4l3 3v8h-3.500v-6h-3v6z" fill="#b5b5b5" stroke="#999" /></g>,
  expand: <g><path d="M4 2v19h5M4 11h4" stroke="#999" fill="none" strokeDasharray="2 1" /><path d="M1 2.500h10M7 8h4v4H7zM7 17h4v4H7z" stroke="#e08a1c" strokeWidth="1.600" fill="none" /><path d="M14 2h5v10h4.500l-7 9-7-9H14z" fill="#5f8ec3" stroke="#32567f" /></g>,
  collapse: <g><path d="M4 2v19h5M4 11h4" stroke="#999" fill="none" strokeDasharray="2 1" /><path d="M1 2.500h10M7 8h4v4H7zM7 17h4v4H7z" stroke="#e08a1c" strokeWidth="1.600" fill="none" /><path d="M14 21h5V11h4.500l-7-9-7 9H14z" fill="#5f8ec3" stroke="#32567f" /></g>,
  remove: <g><rect x="2" y="2" width="17" height="18" fill="#f4f4f4" stroke="#777" strokeWidth="1.500" /><rect x="13" y="14" width="10" height="9" rx="4" fill="#e2555b" /><path d="M15 18.500h6" stroke="#fff" strokeWidth="2" /></g>,
  gears: <g><g stroke="#c0262c" strokeWidth="3.200"><path d="M8 0v16M0 8h16M2.500 2.500l11 11M13.500 2.500l-11 11" /></g><circle cx="8" cy="8" r="2" fill="#fff" /><circle cx="19" cy="12" r="4" fill="#999" /><circle cx="14" cy="20" r="3.500" fill="#8fb0dc" /><path d="M12 15h12l-6 7z" fill="#000" /></g>,
  pyDrop: <g><Python /><path d="M11 15h13l-6.500 7z" fill="#000" /></g>,
  clock: <g fill="#f7f7f7" stroke="#8c8c8c" strokeWidth="1.500"><circle cx="12" cy="12" r="10.500" /><path d="M12 4.500V12l5 4.500" fill="none" /></g>,
  doc: <g fill="#f7f7f7" stroke="#8c8c8c" strokeWidth="1.400"><path d="M3 2h13l5 5v16H3zM16 2v5h5" /><path d="M6 9h8M6 12.500h12M6 16h12M6 19.500h12" /></g>,
  note: <g><path d="M2 2h17v13l-4 4H2z" fill="#fbdf4c" stroke="#cfa90f" strokeWidth="1.500" /><path d="M23 7L14 21" stroke="#9a7a20" strokeWidth="5" /><path d="M22.500 7.500L14.500 20" stroke="#f2d04a" strokeWidth="2.800" /></g>,
  wrench: <g><path d="M10 10L22 21" stroke="#8c7a2a" strokeWidth="5" /><path d="M11 11L22 21" stroke="#efd049" strokeWidth="3" /><path d="M1 5l4 3 2-1 .5-3L4 1c5-1.500 9 2 7.500 7L8 11C4 11.500 0 9 1 5z" fill="#ddd" stroke="#666" /></g>,
};

const Svg = ({ n, s = "size-6" }) => <svg viewBox="0 0 24 24" className={`${s} shrink-0`}>{I[n]}</svg>;
const Caret = ({ c = "#000" }) => (
  <div className="flex w-4 items-center pt-px pl-[2px]"><svg viewBox="0 0 10 5" className="h-[5px] w-[10px]"><path d="M0 0h10L5 5z" fill={c} /></svg></div>
);
const Cell = ({ n }) => {
  if (n === "v") return <Caret />;
  if (n === "V") return <Caret c="#6c6c6c" />;
  const on = n === "hand" || n === "gear";
  return (
    <div className={`flex h-[30px] w-[31px] items-center justify-center border ${on ? "border-[#99c9ef] bg-[#c2dcf3]" : n === "pencil" ? "border-[#b9d8f0] bg-[#dae6f0]" : "border-transparent"}`}>
      <Svg n={n} />
    </div>
  );
};
const Cells = ({ list }) => <div className="flex">{list.split(" ").map((n, i) => <Cell key={i} n={n} />)}</div>;
const Grip = ({ w = "w-[15.500px]" }) => (
  <div className={`flex h-full ${w} shrink-0 items-center`}>
    <div className="mr-[4px] ml-px h-full w-px bg-[#b4b4b4]" />
    <div className="h-[27px] w-[2px] bg-[repeating-linear-gradient(to_bottom,#b0b0b0_0_2px,transparent_2px_4px)]" />
  </div>
);
const Row = ({ h, children }) => (
  <div className={`flex ${h} items-center border-b border-[#b6b6b6] pl-[10.500px] shadow-[inset_0_1px_0_#fbfbfb]`}>{children}</div>
);

const MENU = [["Projekti", "w-[73px]"], ["Muokkaa", "w-[85px]"], ["Näytä", "w-[61px]"], ["Tasot", "w-[55px]"], ["Asetukset", "w-[89px]"], ["Lisäosat", "w-[76px]"], ["Vektori", "w-[69px]"], ["Rasteri", "w-[67px]"], ["Tietokanta", "w-[96px]"], ["Verkko", "w-[67px]"], ["Prosessointi", "w-[106px]"], ["Ohje", "w-[60px]"]];

const VSep = () => (
  <div className="flex h-[15px] w-full shrink-0 flex-col justify-center gap-[4px] pl-[2px]">
    <div className="h-px w-full bg-[#b4b4b4]" />
    <div className="h-[2px] w-[25px] bg-[repeating-linear-gradient(to_right,#b0b0b0_0_2px,transparent_2px_4px)]" />
  </div>
);
const Side = ({ n }) => <div className="flex h-[30px] shrink-0 items-center pl-[3px]"><Svg n={n} /></div>;

const PanelTitle = ({ children }) => (
  <div className="flex h-[22px] items-center border-b border-[#b5b5b5] bg-[#dadada] pl-[3px]">
    <span className="flex-1 text-[16px] leading-[20px]">{children}</span>
    <svg viewBox="0 0 12 12" className="mr-[16px] mb-[3px] size-3"><path d="M3.500 3V1h7.500v6H9M1 4.500h7.500V11H1z" fill="none" stroke="#333" strokeWidth="1.400" /><path d="M3 1.500h8.500M.5 4.500h8.500" stroke="#333" strokeWidth="2" /></svg>
    <svg viewBox="0 0 12 12" className="mr-[8.500px] mb-[2px] size-3"><path d="M1.500 1.500l9 9M10.500 1.500l-9 9" stroke="#333" strokeWidth="2.400" /></svg>
  </div>
);
const Small = ({ n }) => <div className="flex w-[23px] justify-center"><Svg n={n} s="size-4" /></div>;

const TREE = ["Grafiikka", "Interpolointi", "Kartografia", "Rasterianalyysi", "Rasterimuotoinen maastoanaly...", "Rasterityökalut", "Tasotyökalut", "Tiedostotyökalut", "Tietokanta", "Vektorianalyysi", "Vektorigeometria", "Vektoritaulu", "Vektoritiedon luonti", "Vektoritiedon päällekkäisanalyysit", "Vektoritiedosta poiminta", "Verkostoanalyysi"];

const QLogo = ({ on }) => (
  <svg viewBox="0 0 20 20" className="size-5">
    <circle cx="9.500" cy="9.500" r="7.300" fill="none" stroke={on ? "#4a9073" : "#82ab2b"} strokeWidth="4" />
    <path d="M2.300 11A7.300 7.300 0 0 0 10.500 16.700" fill="none" stroke={on ? "#3a7f66" : "#65993a"} strokeWidth="4" />
    <path d="M11 11L19 19" stroke={on ? "#cde8ff" : "#fff"} strokeWidth="6" />
    <path d="M9.500 9.500L14 14" stroke="#d3c65a" strokeWidth="3" /><path d="M12.500 12.500L18.500 18.500" stroke={on ? "#3f8a6a" : "#5b9632"} strokeWidth="3.800" />
    <circle cx="9.200" cy="9.200" r="2.300" fill="#f6d36a" /><circle cx="9.200" cy="9.200" r="1.500" fill="#ee7913" />
  </svg>
);
const Glass = () => <svg viewBox="0 0 14 14" className="size-[13px] shrink-0"><circle cx="5.500" cy="5.500" r="4.500" fill="none" stroke="#8a8a8a" strokeWidth="1.200" /><path d="M8.700 8.700L13 13" stroke="#8a8a8a" strokeWidth="1.400" /></svg>;
const Check = () => <svg viewBox="0 0 16 16" className="size-4 shrink-0"><rect x=".5" y=".5" width="15" height="15" fill="#fff" stroke="#333" /><path d="M3.500 8l3 3 6-6.500" fill="none" stroke="#222" strokeWidth="1.300" /></svg>;
const Chev = ({ d, c = "#444" }) => <svg viewBox="0 0 10 10" className="size-[10px]"><path d={d} fill="none" stroke={c} strokeWidth="1.700" /></svg>;
const Spin = ({ v, w }) => (
  <div className={`flex h-[22px] ${w} items-center border border-[#7a7a7a] bg-white pl-[3px] text-[11.500px]`}>
    <span className="flex-1">{v}</span>
    <div className="flex h-full w-4 flex-col gap-px bg-[#e9e9e9] py-px">
      <div className="flex flex-1 items-center justify-center border border-[#b5b5b5]"><svg viewBox="0 0 8 4" className="h-1 w-2"><path d="M0 4h8L4 0z" /></svg></div>
      <div className="flex flex-1 items-center justify-center border border-[#b5b5b5]"><svg viewBox="0 0 8 4" className="h-1 w-2"><path d="M0 0h8L4 4z" /></svg></div>
    </div>
  </div>
);

const RED = "#ed1c24";
const FRAMES = [[0, 31, 1368, 135], [0, 171, 29.5, 772], [32, 170, 343, 229.500], [32, 401.500, 345.500, 542.500], [375.500, 167, 995, 775], [3, 944.500, 256, 31.500], [261, 946, 1108.500, 30]];
const MARKS = [["2", 1173, 62, 24.5, 20.5], ["3", 459.5, 228.500, 22, 21.5], ["1", 77.5, 288, 19, 17], ["5", 222.5, 424, 23.5, 19.5], ["2", 13, 660.5, 11.5, 21], ["6", 147, 959.500, 18, 13.5], ["4", 415, 961, 19, 14]];

export default function App() {
  return (
    <div className="relative flex h-[977px] w-[1374px] overflow-hidden bg-[#f0f0f0] font-['Open_Sans',sans-serif] text-black">
      <div className="flex w-[1371px] shrink-0 flex-col">
        <div className="flex h-[33px] shrink-0 items-center bg-white pt-[4px] pl-[6px] text-[16px]">
          {MENU.map(([m, w]) => <div key={m} className={`${w} shrink-0 whitespace-nowrap`}>{m}</div>)}
        </div>
        <Row h="h-[34px]">
          <Cells list="file folder save saveAs layout layoutMgr style" /><Grip />
          <Cells list="hand panSel zin zout z11 zfull zsel zlay zlast znext newMap newBm bm refresh" /><Grip w="w-[14.500px]" />
          <Cells list="info action V select v selVal v desel table abacus gear sigma ruler v tip textAnn v" />
        </Row>
        <Row h="h-[34px]">
          <Cells list="pencils pencil saveEd addLine vertex V multi trash cut copy paste undo redo" /><Grip w="w-[14.500px]" />
          <Cells list="abc diag abPin abGray abEye abMove abRot abEd" /><div className="w-[92.500px]" /><Grip />
        </Row>
        <Row h="h-[34px]">
          <Cells list="tri move V rot simp ring part fill delRing delPart reshape offset split splitF splitF merge mergeA rotSym V" />
        </Row>
        <Row h="h-[34px]"><Cells list="di" /></Row>

        <div className="flex h-[775px] shrink-0">
          <div className="flex w-[34px] shrink-0 flex-col pt-[3px]">
            <div className="mt-px mb-[7px] ml-[2px] h-[2px] w-[25px] bg-[repeating-linear-gradient(to_right,#b0b0b0_0_2px,transparent_2px_4px)]" />
            {["layers", "box", "vline", "feather", "chip"].map((n) => <Side key={n} n={n} />)}
            <VSep />
            {["tri2", "globeAdd", "globeFind", "binoc"].map((n) => <Side key={n} n={n} />)}
            <VSep /><Side n="py" /><Side n="leaf" /><VSep /><Side n="help" /><VSep /><Side n="faint" />
          </div>
          <div className="flex w-[344px] shrink-0 flex-col pr-[5px] pl-px">
            <div className="flex h-[226px] shrink-0 flex-col pt-[4px]">
              <PanelTitle>Tasot</PanelTitle>
              <div className="-ml-px flex h-[28px] items-center pt-[2px]">
                {["brush", "addGrp", "eye", "funnel", "eps"].map((n) => <Small key={n} n={n} />)}
                <div className="w-px" /><Caret />
                {["expand", "collapse", "remove"].map((n) => <Small key={n} n={n} />)}
              </div>
              <div className="flex-1 border-y border-[#8b8f9d] bg-white">
                <div className="ml-[26px] flex h-[27px] items-center bg-[#d9d9d9] pl-[3px]">
                  <Check /><div className="mb-px ml-[6px] h-px w-[18px] bg-[#a04fa0]" />
                  <span className="ml-[6px] text-[16px] font-bold tracking-[0.100px] underline">TieViiva</span>
                </div>
              </div>
            </div>
            <div className="flex flex-1 flex-col pt-[9px]">
              <PanelTitle>Prosessointityökalut</PanelTitle>
              <div className="-ml-px flex h-[28px] items-center pt-[2px]">
                {["gears", "pyDrop", "clock", "doc"].map((n) => <Small key={n} n={n} />)}
                <div className="mx-[3px] h-4 w-px bg-[#ccc]" /><Small n="note" /><div className="mx-[4px] h-4 w-px bg-[#ccc]" /><Small n="wrench" />
              </div>
              <div className="flex h-[24px] items-center border border-[#7a7a7a] bg-white pl-[6px]">
                <Glass /><span className="ml-[7px] text-[15px] text-[#767676]">Etsi…</span>
              </div>
              <div className="flex h-[438px] border-y border-r border-[#8b8f9d] bg-white">
                <div className="flex-1 overflow-hidden pr-px">
                  {TREE.map((t, i) => (
                    <div key={t} className="flex h-[27px] items-center">
                      <div className="flex w-[26px] justify-center pr-[3px]"><Chev d="M3 1l4.500 4L3 9" c="#999" /></div>
                      <div className={`flex h-full flex-1 items-center pl-[4px] ${i === 3 ? "bg-[#cde8ff]" : ""}`}>
                        <QLogo on={i === 3} /><span className="ml-[7px] text-[16px] tracking-[0.030px] whitespace-nowrap">{t}</span>
                      </div>
                    </div>
                  ))}
                </div>
                <div className="flex w-[23px] flex-col items-center bg-[#f0f0f0]">
                  <div className="flex h-[24px] items-center"><Chev d="M1 7l4-4 4 4" /></div>
                  <div className="h-[295px] w-[22px] self-start bg-[#cdcdcd]" />
                  <div className="flex-1" />
                  <div className="flex h-[24px] items-center"><Chev d="M1 3l4 4 4-4" /></div>
                </div>
              </div>
              <div className="flex h-[26px] text-[14px] tracking-[-0.280px]">
                <div className="flex w-[158px] items-center bg-white pt-px pl-[14px]">Prosessointityökalut</div>
                <div className="flex h-[24px] w-[65px] items-center justify-center border-b border-l border-[#d0d0d0] pt-px">Selain</div>
              </div>
            </div>
          </div>
          <div className="flex-1 border-l border-[#8b8b8b] bg-white">
            <svg viewBox="379 169 992 775" className="h-[775px] w-[992px]">
              <g transform="translate(580 200) scale(.33333)">
                <path d={ROADS} fill="none" stroke="#e35b8a" strokeWidth="4.100" strokeLinejoin="round" strokeLinecap="round" />
              </g>
            </svg>
          </div>
        </div>

        <div className="flex h-[33px] shrink-0 items-center border-b border-[#999] pt-px pl-[3px] font-['DejaVu_Sans_Condensed','DejaVu_Sans',sans-serif] text-[11px] tracking-[-0.150px]">
          <div className="flex h-[24px] w-[199px] items-center border border-[#7a7a7a] bg-white pl-[7px]">
            <Glass /><span className="ml-[7px] text-[15px] text-[#767676]">Etsi (Ctrl+K)</span>
          </div>
          <span className="w-[268px] pl-[7px]">Valmis</span>
          <span className="w-[70px] pl-[8px]">Koordinaatit</span>
          <div className="flex h-[21px] w-[98px] items-center border border-[#7a7a7a] bg-white pl-[4px] tracking-[-0.160px]">-265010,7023050</div>
          <svg viewBox="0 0 24 24" className="ml-[2px] size-[22px]"><g fill="none" stroke="#111"><path d="M3 3q4-3 8 0q5 5 3 8q-4 2-8-2q-4-4-3-6z" fill="#fff" strokeWidth="1.800" /><path d="M7 2l2 8M10 2l3 8M4 5l6 2" strokeWidth="1.800" /><circle cx="14.500" cy="16" r="5" fill="#fff" strokeWidth="2.200" /><circle cx="15" cy="16.500" r="1.500" strokeWidth="1.500" /><path d="M16 6l4-3M18 9l4-1M4 14l6 6M2 12v3M10 14l-3-2" strokeWidth="1.700" /></g></svg>
          <span className="w-[70px] pl-[13px]">Mittakaava</span>
          <div className="flex h-[23px] w-[101px] items-center justify-between border border-[#7a7a7a] bg-white pr-[7px] pl-[4px]">1:8746858<Chev d="M1 3l4 4 4-4" c="#555" /></div>
          <svg viewBox="0 0 18 20" className="mr-[8px] ml-[12px] h-5 w-[18px]"><path d="M4 10V6a5 5 0 0 1 10 0v4" fill="none" stroke="#8c8c8c" strokeWidth="2" /><rect x="1" y="9" width="16" height="11" rx="1" fill="#636363" /></svg>
          <span className="w-[55px]">Suurennus</span>
          <Spin v="100%" w="w-[93px]" />
          <span className="w-[46px] pl-[8px]">Kierto</span>
          <Spin v="0,0 °" w="w-[91px]" />
          <div className="mb-[4px] ml-[6px] flex items-center"><Check /><span className="ml-[6px] pt-[2px]">Piirrä</span></div>
          <svg viewBox="0 0 22 20" className="ml-[18px] h-5 w-[22px]"><g fill="none" stroke="#777" strokeWidth="1.200"><circle cx="11" cy="10" r="8.500" fill="#d8d8d8" /><ellipse cx="11" cy="10" rx="4" ry="8.500" /><path d="M2.500 6.500h17M2.500 13h17" /><path d="M0 9.500h22" strokeWidth="3" stroke="#6d6d6d" /></g></svg>
          <span className="ml-[3px] w-[70px]">EPSG:3067</span>
          <svg viewBox="0 0 22 20" className="h-[21px] w-[23px]"><ellipse cx="11" cy="9" rx="10.500" ry="8.500" fill="#686868" /><path d="M12 15l8 5-2-8z" fill="#686868" /><g fill="#fff"><circle cx="6" cy="9" r="1.500" /><circle cx="11" cy="9" r="1.500" /><circle cx="16" cy="9" r="1.500" /></g></svg>
          <svg viewBox="0 0 12 12" className="mt-[14px] ml-[12px] size-[12px]"><path d="M8 1h3v3H8zM4 5h3v3H4zM8 5h3v3H8zM0 9h3v3H0zM4 9h3v3H4zM8 9h3v3H8z" fill="#bdbdbd" /></svg>
        </div>
      </div>
      <div className="flex w-[3px] flex-col border-l border-[#a82a62] bg-[#d6d6d6]">
        <div className="h-[40px]" />
        <div className="h-[28px] bg-linear-to-b from-[#31a4d8] via-[#6b52c9] to-[#d6257e]" />
        <div className="mt-[44px] h-px bg-[#444]" /><div className="mt-[6px] h-px bg-[#444]" />
      </div>

      <svg viewBox="0 0 1374 977" className="pointer-events-none absolute inset-0 h-[977px] w-[1374px]">
        {FRAMES.map(([x, y, w, h], i) => <rect key={i} x={x + 1.5} y={y + 1.5} width={w - 3} height={h - 3} fill="none" stroke={RED} strokeWidth="3" />)}
        {MARKS.map(([t, x, y, rx, ry], i) => (
          <g key={i}>
            <ellipse cx={x} cy={y} rx={rx} ry={ry} fill="none" stroke={RED} strokeWidth="3" />
            <text x={x} y={y + 8} textAnchor="middle" fontSize="22" fontWeight="700" fill={RED} className="font-['Liberation_Sans']">{t}</text>
          </g>
        ))}
      </svg>
    </div>
  );
}
